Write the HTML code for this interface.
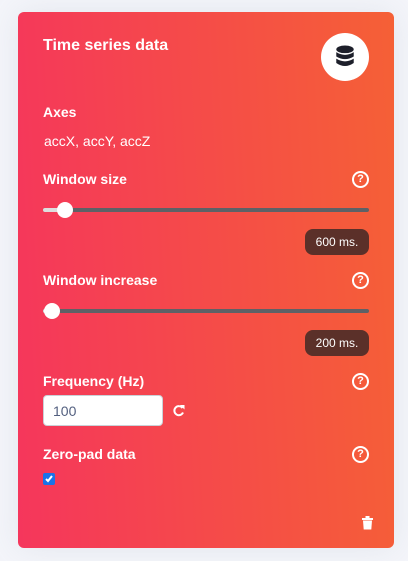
<!DOCTYPE html>
<html><head><style>
*{margin:0;padding:0;box-sizing:border-box}
body{width:408px;height:561px;background:#f4f5fa;font-family:"Liberation Sans","DejaVu Sans",sans-serif;position:relative;overflow:hidden}
.card{position:absolute;left:18px;top:12px;width:376px;height:536px;border-radius:6px;background:linear-gradient(87deg,#f5365c 0,#f56036 100%);box-shadow:0 0 2rem 0 rgba(136,152,170,.15)}
.a{position:absolute;color:#fff}
.lbl{font-size:14px;font-weight:bold;left:43px}
.help{position:absolute;left:352px;width:17px;height:17px;border:2px solid #fff;border-radius:50%;color:#fff;font-size:11px;font-weight:bold;text-align:center;line-height:13px}
.track{position:absolute;left:43px;width:326px;height:4px;border-radius:2px;background:#5e6166}
.fill{position:absolute;left:43px;height:4px;border-radius:2px;background:#dedede}
.thumb{position:absolute;width:16px;height:16px;border-radius:50%;background:#fff}
.badge{position:absolute;height:26px;border-radius:8px;background:#5b3029;color:#fff;font-size:12px;line-height:26px;text-align:center;width:64px;left:305px}
</style></head><body>
<div class="card"></div>
<div class="a" style="left:43px;top:37px;font-size:16px;font-weight:bold">Time series data</div>
<div style="position:absolute;left:321px;top:33px;width:48px;height:48px;border-radius:50%;background:#fff"></div>
<svg style="position:absolute;left:335px;top:45px" width="20" height="24" viewBox="0 0 18 22"><g fill="#1d1f2a"><ellipse cx="9" cy="4" rx="8" ry="3.5"/><path d="M1 6.5q8 5 16 0v4q-8 5-16 0z"/><path d="M1 12.5q8 5 16 0v4q-8 5.5-16 0z"/></g></svg>
<div class="a lbl" style="top:104px">Axes</div>
<div class="a" style="left:44px;top:133px;font-size:14px">accX, accY, accZ</div>
<div class="a lbl" style="top:171px">Window size</div>
<div class="help" style="top:171px">?</div>
<div class="track" style="top:208px"></div><div class="fill" style="top:208px;width:22px"></div>
<div class="thumb" style="left:57px;top:202px"></div>
<div class="badge" style="top:229px">600 ms.</div>
<div class="a lbl" style="top:272px">Window increase</div>
<div class="help" style="top:272px">?</div>
<div class="track" style="top:309px"></div><div class="fill" style="top:309px;width:8px"></div>
<div class="thumb" style="left:44px;top:303px"></div>
<div class="badge" style="top:330px">200 ms.</div>
<div class="a lbl" style="top:373px">Frequency (Hz)</div>
<div class="help" style="top:373px">?</div>
<div style="position:absolute;left:43px;top:395px;width:120px;height:31px;background:#fff;border:1px solid #cad1d7;border-radius:4px;font-size:14px;padding:7px 9px;color:#525f7f">100</div>
<svg style="position:absolute;left:172px;top:404px" width="14" height="13" viewBox="0 0 14 13"><path d="M10.5 4A4.5 4.5 0 1 0 11 8.5" fill="none" stroke="#fff" stroke-width="2"/><path d="M8 1h4.5v4.5z" fill="#fff"/></svg>
<div class="a lbl" style="top:446px">Zero-pad data</div>
<div class="help" style="top:446px">?</div>
<div style="position:absolute;left:43px;top:473px;width:12px;height:12px;background:#1a73e8;border-radius:2px"></div>
<svg style="position:absolute;left:44px;top:474px" width="10" height="10" viewBox="0 0 10 10"><path d="M2 5l2 2 4-5" fill="none" stroke="#fff" stroke-width="2"/></svg>
<svg style="position:absolute;left:362px;top:516px" width="11" height="14" viewBox="0 0 11 14"><path d="M0 2h11v2H0zM3.5 0h4v2h-4zM1 4.5h9l-.7 9H1.7z" fill="#fff"/></svg>
</body></html>
